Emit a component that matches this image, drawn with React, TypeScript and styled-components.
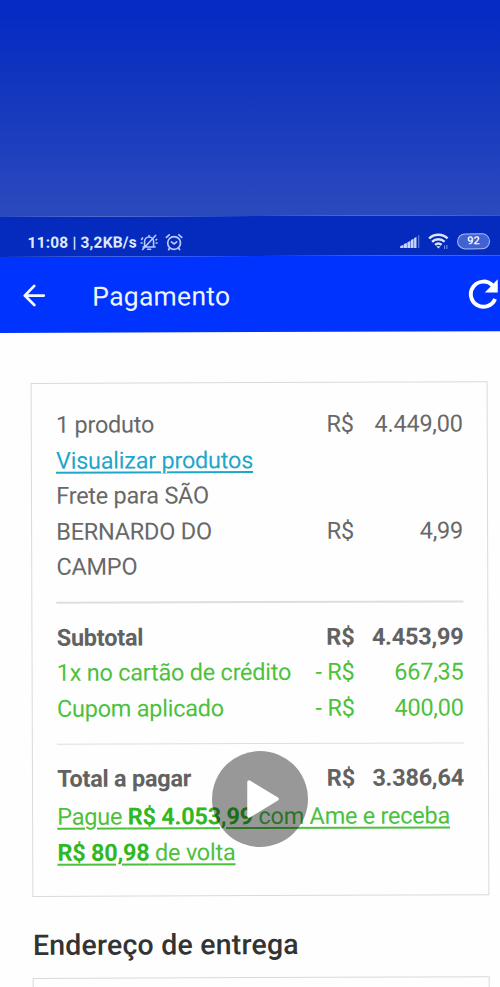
import React from 'react';
import styled, { createGlobalStyle, css } from 'styled-components';

const GlobalStyle = createGlobalStyle`
  * { box-sizing: border-box; }
  html, body { margin: 0; padding: 0; background: #fefefe; }
  body { overflow: hidden; font-family: Roboto, "Liberation Sans", sans-serif; }
`;

const Page = styled.main`
  position: relative;
  width: 500px;
  height: 987px;
  overflow: hidden;
  background: #fefefe;
`;

const Backdrop = styled.div`
  height: 217px;
  background: linear-gradient(#042bc4 0%, #052bc4 6%, #1337bd 42%, #1b3dbe 62%, #2946be 90%, #294bbd 100%);
`;

/* The recorded phone screen, held at a very slight tilt. */
const Screen = styled.section`
  height: 800px;
  margin: 0 -10px;
  background: #fefefe;
  transform: rotate(-0.2deg);
  transform-origin: 10px 0;
`;

const StatusBar = styled.header`
  display: flex;
  align-items: center;
  justify-content: space-between;
  height: 39.5px;
  padding: 11.5px 20px 0 37.5px;
  background: #052bbe;
  color: #dfe8ff;
`;

const StatusGroup = styled.div<{ $gap: number }>`
  display: flex;
  align-items: center;
  gap: ${({ $gap }) => $gap}px;
`;

const Clock = styled.span`
  width: 109.5px;
  font-size: 15.5px;
  font-weight: 700;
  line-height: 20px;
  white-space: pre;
  letter-spacing: 0.17px;
`;

const Battery = styled.span`
  width: 33px;
  height: 16px;
  border: 1.6px solid #a9bcf4;
  border-radius: 8px;
  background: #4162d3;
  color: #fff;
  font-size: 11px;
  font-weight: 500;
  line-height: 14px;
  text-align: center;
`;

const AppBar = styled.nav`
  display: flex;
  align-items: center;
  height: 76.5px;
  padding: 0 12px 0 32px;
  background: #0033fe;
  color: #eef4ff;
`;

const Title = styled.h1`
  flex: 1;
  margin: 0 0 0 46px;
  padding-top: 5px;
  font-size: 26.5px;
  font-weight: 400;
  line-height: 34px;
  letter-spacing: 0.25px;
`;

const Content = styled.div`
  padding: 50px 21.5px 0 39.9px;
`;

const Card = styled.article`
  width: 457px;
  height: 514px;
  padding: 24px 24px 0 24.3px;
  border: 1.5px solid #dadada;
  color: #686868;
  font-size: 23.5px;
  line-height: 35.5px;
  letter-spacing: -0.25px;
`;

const Line = styled.div<{ $bold?: boolean; $green?: boolean }>`
  display: grid;
  grid-template-columns: 1fr 50px 109px;
  align-items: center;
  white-space: nowrap;
  ${({ $bold }) => $bold && css`font-weight: 700; color: #626262;`}
  ${({ $green }) => $green && css`color: #4cc13c;`}
`;

const Label = styled.span``;

const Money = styled.span`
  text-align: right;
`;

const ProductsLink = styled.a`
  display: block;
  color: #1fa6cb;
  text-decoration: underline;
  text-decoration-thickness: 1.5px;
  text-underline-offset: 3px;
`;

const Rule = styled.hr`
  height: 1.5px;
  margin: 16.5px 0 17px;
  border: 0;
  background: #dedede;
`;

const Cashback = styled.p`
  margin: 1.5px -10px 0 0;
  color: #4cc13c;
  line-height: 36px;
  white-space: nowrap;
`;

const CashbackLine = styled.span`
  display: block;
  text-decoration: underline;
  text-decoration-thickness: 2px;
  text-underline-offset: 3px;
  b { color: #2fb824; }
`;

const Heading = styled.h2`
  margin: 31.5px 0 15.5px 0.5px;
  color: #333;
  font-size: 28.5px;
  font-weight: 500;
  line-height: 34px;
  letter-spacing: 0.2px;
`;

const PlayButton = styled.button`
  position: absolute;
  left: 212px;
  top: 751px;
  width: 96px;
  height: 96px;
  padding: 0;
  border: 0;
  border-radius: 50%;
  background: rgba(0, 0, 0, 0.4);
  svg { display: block; }
`;

const MutedBell = () => (
  <svg width="18" height="18" viewBox="0 0 18 18" fill="none" stroke="#b9caff" strokeWidth="1.6" strokeLinecap="round">
    <path d="M4.5 13V8a4.5 4.5 0 0 1 9 0v5M3 13.5h12M7.5 15.8h3M9 2v1M2.5 16 15.5 2M1.5 6l1-1.5M1 9.5h1M16 9.5h1M16 6.5l.6-.5" />
  </svg>
);

const Alarm = () => (
  <svg width="18" height="18" viewBox="0 0 18 18" fill="none" stroke="#b9caff" strokeWidth="1.7" strokeLinecap="round">
    <circle cx="9" cy="9.6" r="6.4" />
    <path d="M1.3 4 4.2 1.4M16.7 4l-2.9-2.6M6.3 8.5 9 10.6l2.6-2.1M4.8 14.5l-1.3 1.7M13.2 14.5l1.3 1.7" />
  </svg>
);

const Signal = () => (
  <svg width="20" height="15" viewBox="0 0 20 15" fill="#c9d6ff">
    <path d="M0 14.5v-2l3.4-1v3zM3.8 14.5v-4l3-1v5zM7.3 14.5V8.7l3-1.3v7.1zM10.8 14.5V6.5l2.7-1.2v9.2zM14 14.5V4.6l2.4-1.3v11.2z" />
    <path d="M18 14.5V1.5h1.2v13z" opacity=".45" />
  </svg>
);

const Wifi = () => (
  <svg width="21" height="17" viewBox="0 0 21 17" fill="none" stroke="#dce6ff" strokeWidth="2.4">
    <path d="M1 6a13.5 13.5 0 0 1 18.5 0M4 9.3a9 9 0 0 1 12.5 0M7 12.4a5 5 0 0 1 6.5 0" />
    <path d="m8.2 13.8 2.1 2.3 2.1-2.3z" fill="#dce6ff" stroke="none" />
    <path d="M16.5 16.5V13M18.8 12.5v4" stroke="#7f9af0" strokeWidth="1" />
  </svg>
);

const BackArrow = () => (
  <svg width="24" height="24" viewBox="0 0 24 24" fill="none" stroke="#f2f6ff" strokeWidth="2.8" strokeLinecap="round" strokeLinejoin="round">
    <path d="M12 3 2.5 12.7l9.5 9.4M3 12.7h18.5" />
  </svg>
);

const Reload = () => (
  <svg width="30" height="32" viewBox="0 0 30 32" fill="none">
    <path d="M26.8 21.7A12.6 12.6 0 1 1 24.5 8.4" stroke="#fff" strokeWidth="3.9" />
    <path d="M29.5 2v13.2H16.5z" fill="#fff" />
  </svg>
);

export default function App() {
  return (
    <>
      <GlobalStyle />
      <Page>
        <Backdrop />
        <Screen>
          <StatusBar>
            <StatusGroup $gap={7}>
              <StatusGroup $gap={3}>
                <Clock>11:08 | 3,2KB/s</Clock>
                <MutedBell />
              </StatusGroup>
              <Alarm />
            </StatusGroup>
            <StatusGroup $gap={8}>
              <Signal />
              <Wifi />
              <Battery>92</Battery>
            </StatusGroup>
          </StatusBar>
          <AppBar>
            <BackArrow />
            <Title>Pagamento</Title>
            <Reload />
          </AppBar>
          <Content>
            <Card>
              <Line>
                <Label>1 produto</Label>
                <Money>R$</Money>
                <Money>4.449,00</Money>
              </Line>
              <ProductsLink>Visualizar produtos</ProductsLink>
              <Line>
                <Label>Frete para SÃO<br />BERNARDO DO<br />CAMPO</Label>
                <Money>R$</Money>
                <Money>4,99</Money>
              </Line>
              <Rule />
              <Line $bold>
                <Label>Subtotal</Label>
                <Money>R$</Money>
                <Money>4.453,99</Money>
              </Line>
              <Line $green>
                <Label>1x no cartão de crédito</Label>
                <Money>- R$</Money>
                <Money>667,35</Money>
              </Line>
              <Line $green>
                <Label>Cupom aplicado</Label>
                <Money>- R$</Money>
                <Money>400,00</Money>
              </Line>
              <Rule />
              <Line $bold>
                <Label>Total a pagar</Label>
                <Money>R$</Money>
                <Money>3.386,64</Money>
              </Line>
              <Cashback>
                <CashbackLine>Pague <b>R$ 4.053,99</b> com Ame e receba</CashbackLine>
                <CashbackLine><b>R$ 80,98</b> de volta</CashbackLine>
              </Cashback>
            </Card>
            <Heading>Endereço de entrega</Heading>
            <Card />
          </Content>
        </Screen>
        <PlayButton aria-label="Reproduzir">
          <svg width="96" height="96" viewBox="0 0 96 96">
            <path d="M37 31 65 48 37 65z" fill="#fff" stroke="#fff" strokeWidth="3.5" strokeLinejoin="round" />
          </svg>
        </PlayButton>
      </Page>
    </>
  );
}
